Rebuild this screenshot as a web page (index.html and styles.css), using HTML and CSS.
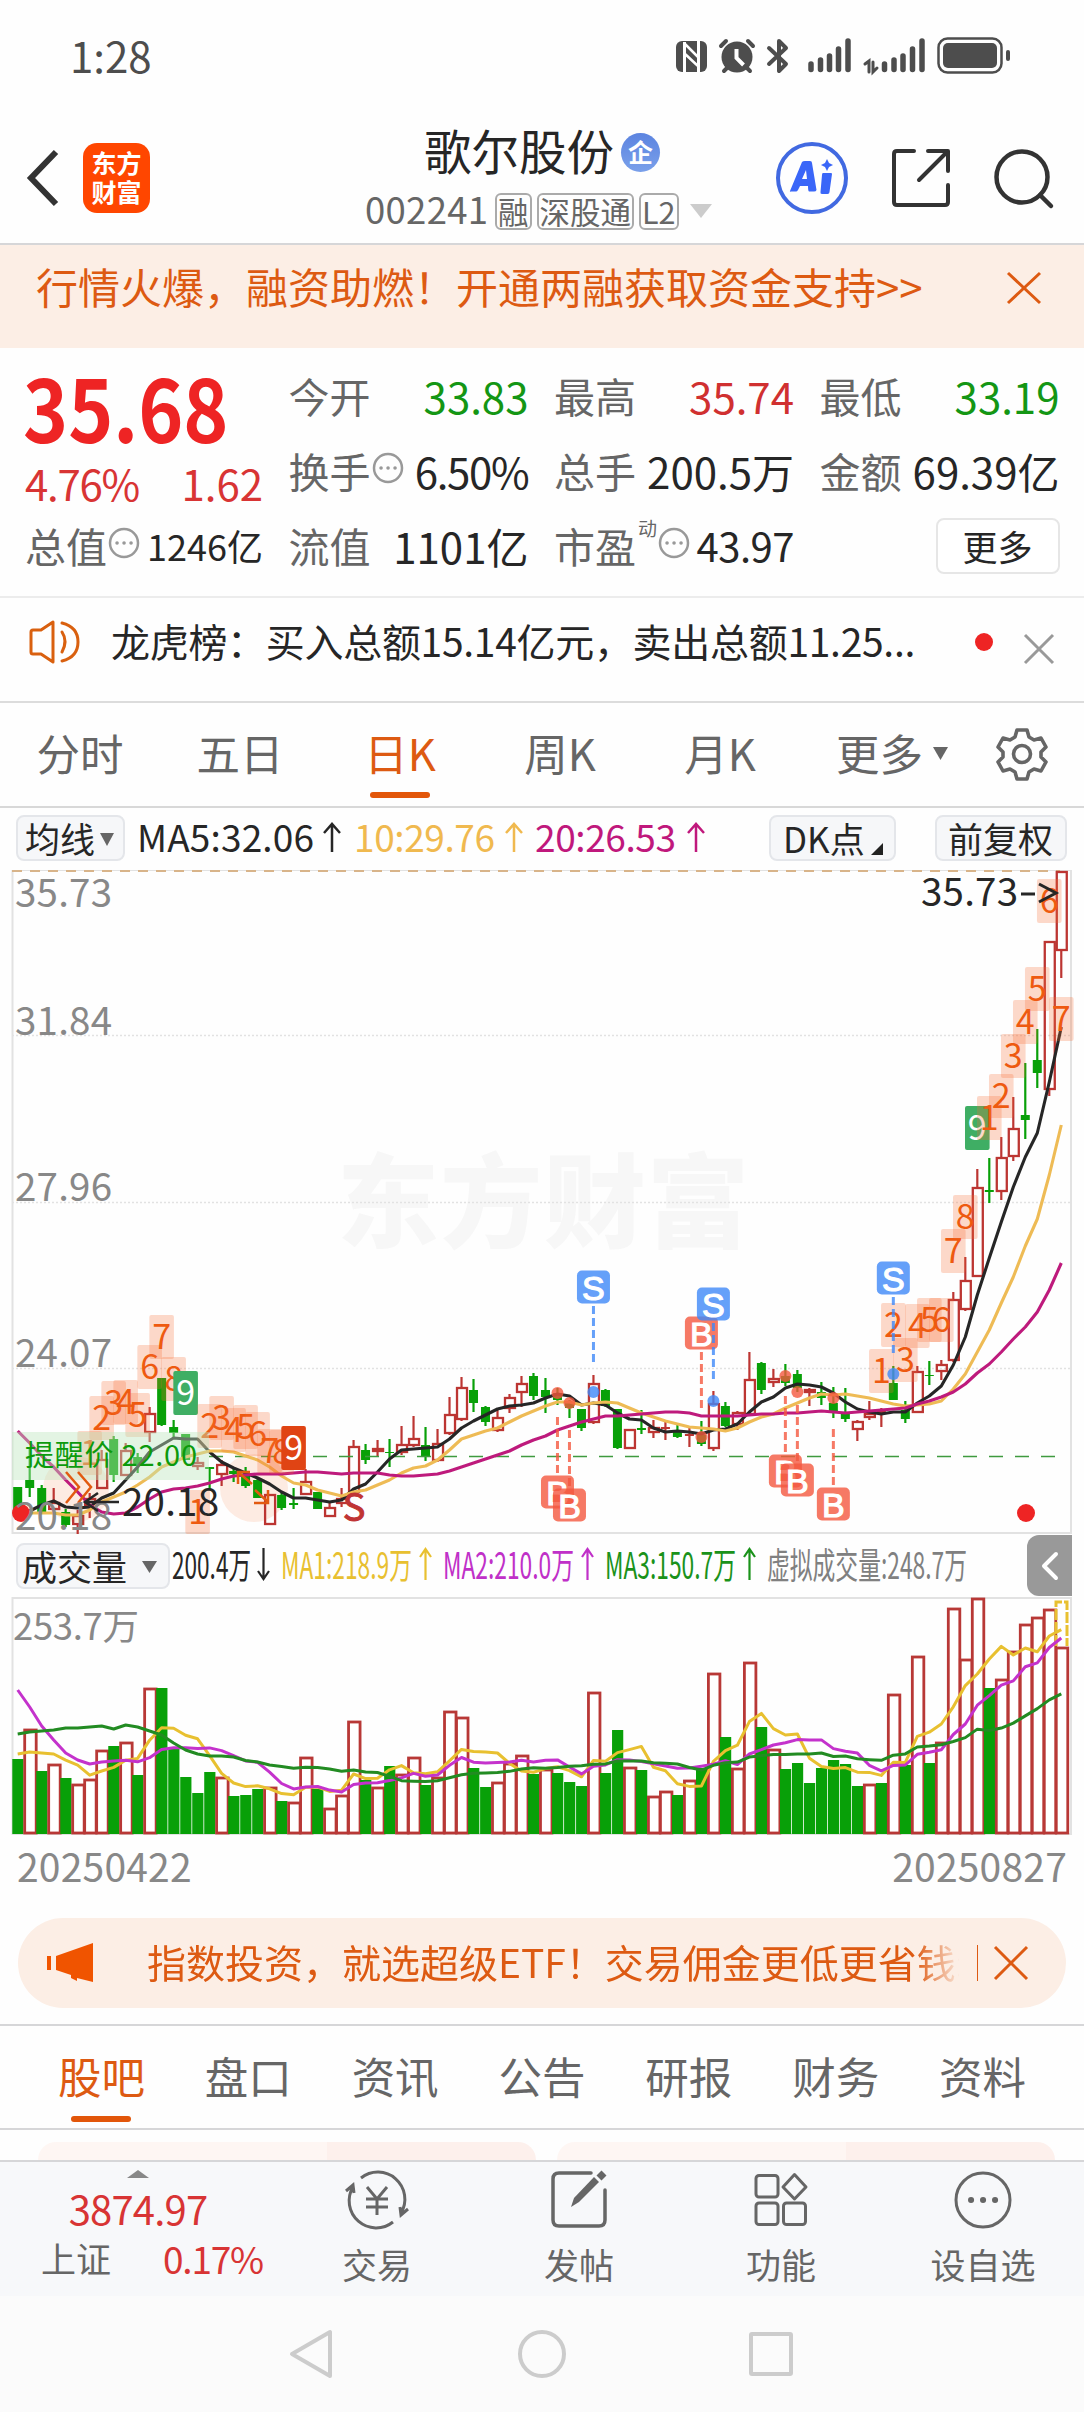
FILE: index.html
```html
<!DOCTYPE html>
<html lang="zh-CN">
<head>
<meta charset="utf-8">
<title>歌尔股份 002241</title>
<link rel="stylesheet" href="styles.css">
</head>
<body>
<div class="status">
  <span class="clock">1:28</span>
  <svg class="status-icons" width="340" height="40" viewBox="672 36 340 40" fill="#4d4d4d" stroke-linecap="round">
    <rect x="676" y="41" width="31" height="31" rx="6"/>
    <g stroke="#fff" stroke-width="3" fill="none" stroke-linecap="butt"><path d="M684.5 72V42M698.500 72V41"/><path d="M684 43l15 15M684 53l15 14" stroke-width="2.500"/></g>
    <circle cx="737" cy="57" r="15.500"/>
    <path d="M721 46l5-5M753 46l-5-5M724 71l4-4M750 71l-4-4" stroke="#4d4d4d" stroke-width="4"/>
    <path d="M736.500 49v9l7 7" fill="none" stroke="#fff" stroke-width="4" stroke-linecap="butt"/>
    <path d="M769 48l17 16-7 7V41l7 7-17 16" fill="none" stroke="#4d4d4d" stroke-width="4" stroke-linejoin="round"/>
    <path d="M811 64v5.500M820.500 60v9.500M829.500 56v13.500M838.500 49v20.500M848 41v28.500M884.500 64v5.500M894 60v9.500M903 56v13.500M912.500 49v20.500M922 41v28.500" stroke="#4d4d4d" stroke-width="5.500"/>
    <path d="M865 64l4-3v11M873 62v10l4-4" fill="none" stroke="#4d4d4d" stroke-width="3"/>
    <rect x="938.500" y="38.500" width="63" height="34" rx="9" fill="none" stroke="#4d4d4d" stroke-width="2.500"/>
    <rect x="943" y="43" width="54" height="25" rx="5"/>
    <rect x="1006" y="50" width="4" height="11" rx="2"/>
  </svg>
</div>

<header class="header">
  <div class="header-left">
    <svg width="32" height="56" viewBox="0 0 32 56" fill="none" stroke="#333" stroke-width="6"><path d="M29 2L4 28l25 26"/></svg>
    <div class="logo"><span>东方</span><span>财富</span></div>
  </div>
  <div class="header-mid">
    <div class="title"><span>歌尔股份</span><i class="badge">企</i></div>
    <div class="code"><span class="num">002241</span><b>融</b><b>深股通</b><b>L2</b><svg width="22" height="14"><path d="M0 0h22L11 14z" fill="#ccc"/></svg></div>
  </div>
  <div class="header-right">
    <svg width="72" height="72" viewBox="0 0 72 72" fill="#3a66f8">
      <circle cx="36" cy="36" r="34" fill="none" stroke="#4169e1" stroke-width="4"/>
      <path fill-rule="evenodd" d="M14 49L26 20Q27 19 29 19H34Q36 19 36 21L40.500 48Q40 49.500 38 49.500H33Q32 49 32 44H24L22 48Q21 49.500 20 49.500H15Q13.500 50 14 49zM26 37h5l-1-9z"/>
      <path d="M47 31h8q1 0 1 1l-2.500 18q0 2-2 2H46q-2 0-1.500-2l1.500-17q0-2 1-2zM51 17l2 4 4 2-4 2-2 4-2-4-4-2 4-2z"/>
    </svg>
    <svg width="60" height="60" viewBox="0 0 60 60" fill="none" stroke="#333" stroke-width="4" stroke-linecap="round" stroke-linejoin="round"><path d="M23 3H6Q3 3 3 6v48q0 3 3 3h48q3 0 3-3V37M37 3h20v20M56 4L28 32"/></svg>
    <svg width="60" height="62" viewBox="0 0 60 62" fill="none" stroke="#333" stroke-width="4.500" stroke-linecap="round"><circle cx="28" cy="30" r="25.500"/><path d="M46 48l11 11"/></svg>
  </div>
</header>

<div class="banner"><span>行情火爆，融资助燃！开通两融获取资金支持&gt;&gt;</span>
  <svg width="34" height="32" viewBox="0 0 34 32" stroke="#dd5a12" stroke-width="3"><path d="M1 1l32 30M33 1L1 31"/></svg>
</div>

<section class="quote">
  <div class="price-cell"><strong>35.68</strong><div class="pct"><span>4.76%</span><span>1.62</span></div></div>
  <div class="cell"><label>今开</label><span class="green">33.83</span></div>
  <div class="cell"><label>最高</label><span class="red">35.74</span></div>
  <div class="cell"><label>最低</label><span class="green">33.19</span></div>
  <div class="cell"><label>换手<svg class="info" viewBox="0 0 32 32"><circle cx="16" cy="16" r="14"/><path d="M9 16h.1M16 16h.1M23 16h.1"/></svg></label><span class="rate">6.50%</span></div>
  <div class="cell"><label>总手</label><span>200.5万</span></div>
  <div class="cell"><label>金额</label><span>69.39亿</span></div>
  <div class="cell"><label>总值<svg class="info" viewBox="0 0 32 32"><circle cx="16" cy="16" r="14"/><path d="M9 16h.1M16 16h.1M23 16h.1"/></svg></label><span class="small">1246亿</span></div>
  <div class="cell"><label>流值</label><span>1101亿</span></div>
  <div class="cell"><label>市盈<sup>动</sup><svg class="info" viewBox="0 0 32 32"><circle cx="16" cy="16" r="14"/><path d="M9 16h.1M16 16h.1M23 16h.1"/></svg></label><span class="pe">43.97</span></div>
  <div class="cell end"><button class="more">更多</button></div>
</section>

<div class="notice">
  <svg width="52" height="44" viewBox="0 0 52 44" fill="none" stroke="#d9600f" stroke-width="3" stroke-linecap="round" stroke-linejoin="round"><path d="M24 2v40L12 34H4q-2 0-2-2V12q0-2 2-2h8zM33 12q6 9 0 20M33 3q16 4 16 19T33 41"/></svg>
  <span>龙虎榜：买入总额15.14亿元，卖出总额11.25...</span>
  <i class="dot"></i>
  <svg width="30" height="30" viewBox="0 0 30 30" stroke="#999" stroke-width="3"><path d="M1 1l28 28M29 1L1 29"/></svg>
</div>

<nav class="periods">
  <a>分时</a><a>五日</a><a class="on">日K</a><a>周K</a><a>月K</a>
  <a class="more-tab">更多<svg width="15" height="13"><path d="M0 0h15L7.500 13z" fill="#666"/></svg></a>
  <a><svg width="54" height="54" viewBox="0 0 54 54" fill="none" stroke="#666" stroke-width="3.600" stroke-linejoin="round"><path d="M22 3h10l2 7 5 3 7-2 5 9-5 5v5l5 5-5 9-7-2-5 3-2 7H22l-2-7-5-3-7 2-5-9 5-5v-5l-5-5 5-9 7 2 5-3z"/><circle cx="27" cy="27" r="8.500"/></svg></a>
</nav>

<div class="ma-row">
  <button class="chip ma-chip">均线<svg width="14" height="13"><path d="M0 0h14L7 13z" fill="#666"/></svg></button>
  <svg class="ma-text" width="580" height="52" viewBox="136 811 580 52">
    <g font-size="37"><text x="137" y="852" textLength="177" fill="#262626">MA5:32.06</text>
    <text x="354" y="852" textLength="141" fill="#f0b94f">10:29.76</text>
    <text x="535" y="852" textLength="141" fill="#c0187c">20:26.53</text></g>
    <g fill="none" stroke-width="2.500"><path stroke="#262626" d="M332 852V824M324 833l8-9 8 9"/><path stroke="#f0b94f" d="M514 852V824M506 833l8-9 8 9"/><path stroke="#c0187c" d="M696 852V824M688 833l8-9 8 9"/></g>
  </svg>
  <button class="chip dk-chip">DK点<svg width="12" height="12"><path d="M12 0v12H0z" fill="#222"/></svg></button>
  <button class="chip fq-chip">前复权</button>
</div>

<svg id="kline" width="1084" height="664" viewBox="0 870 1084 664"></svg>

<div class="vol-row">
  <button class="chip vol-chip">成交量<svg width="15" height="12"><path d="M0 0h15L7.500 12z" fill="#666"/></svg></button>
  <svg class="vol-text" width="860" height="52" viewBox="167 1539 860 52">
    <g font-size="36.500">
    <text x="172" y="1579" textLength="79" lengthAdjust="spacingAndGlyphs" fill="#262626">200.4万</text>
    <text x="281" y="1579" textLength="131" lengthAdjust="spacingAndGlyphs" fill="#e8c030">MA1:218.9万</text>
    <text x="443" y="1579" textLength="131" lengthAdjust="spacingAndGlyphs" fill="#c030c8">MA2:210.0万</text>
    <text x="605" y="1579" textLength="131" lengthAdjust="spacingAndGlyphs" fill="#1a921a">MA3:150.7万</text>
    <text x="767" y="1579" textLength="200" lengthAdjust="spacingAndGlyphs" fill="#808080">虚拟成交量:248.7万</text></g>
    <g fill="none" stroke-width="2.200"><path stroke="#262626" d="M263.500 1548v31M258 1571l5.500 8 5.500-8"/><path stroke="#e8c030" d="M425.500 1580v-31M420 1557l5.500-8 5.500 8"/><path stroke="#c030c8" d="M587.500 1580v-31M582 1557l5.500-8 5.500 8"/><path stroke="#1a921a" d="M749.500 1580v-31M744 1557l5.500-8 5.500 8"/></g>
  </svg>
  <div class="handle"><svg width="18" height="30" viewBox="0 0 18 30" fill="none" stroke="#fff" stroke-width="4" stroke-linecap="round" stroke-linejoin="round"><path d="M15 3L3 15l12 12"/></svg></div>
</div>

<svg id="volume" width="1084" height="240" viewBox="0 1597 1084 240"></svg>

<div class="dates"><span>20250422</span><span>20250827</span></div>

<div class="promo">
  <svg width="48" height="40" viewBox="0 0 48 40" fill="#f05400"><path d="M0 13h4v14H0zM9 13L46 0v39L30 35v3l-6-3v-3l-15-5z"/></svg>
  <span>指数投资，就选超级ETF！交易佣金更低更省钱:</span>
  <i></i>
  <svg width="34" height="34" viewBox="0 0 34 34" stroke="#dd5a12" stroke-width="3"><path d="M1 1l32 32M33 1L1 33"/></svg>
</div>

<nav class="sections"><a class="on">股吧</a><a>盘口</a><a>资讯</a><a>公告</a><a>研报</a><a>财务</a><a>资料</a></nav>
<div class="cards"><div></div><div></div></div>

<nav class="bottom">
  <div class="index"><svg width="22" height="8"><path d="M11 0l11 8H0z" fill="#888"/></svg><b>3874.97</b><div><span>上证</span><em>0.17%</em></div></div>
  <a><svg width="66" height="60" viewBox="-33 -30 66 60" fill="none" stroke="#666" stroke-width="3"><path d="M-16-22A27 27 0 0 1 24 13M16 22A27 27 0 0 1-24-13M-31-9l7-6 1 8M31 9l-7 6-1-8M-10-13L0-1 10-13M0-1V15M-11-1H11M-11 7H11"/></svg>交易</a>
  <a><svg width="60" height="60" viewBox="-30 -30 60 60" fill="none" stroke="#666" stroke-width="3.500" stroke-linecap="round"><path d="M12-27H-20Q-26-27-26-21V20Q-26 26-20 26H20Q26 26 26 20V-10"/><path d="M-8 7L-5-2 15-23 20-18 0 2z" fill="#666" stroke="none"/><path d="M20-22L25-27" stroke-width="7" stroke-linecap="butt"/></svg>发帖</a>
  <a><svg width="60" height="60" viewBox="-30 -30 60 60" fill="none" stroke="#666" stroke-width="3"><rect x="-25" y="-24.500" width="22" height="21.500" rx="3"/><rect x="-25" y="3" width="22" height="21.500" rx="3"/><rect x="2.500" y="3" width="22" height="21.500" rx="3"/><path d="M13.500-25.500L25-13 13.500-1 2-13z" stroke-linejoin="round"/></svg>功能</a>
  <a><svg width="60" height="60" viewBox="-30 -30 60 60" fill="none" stroke="#666" stroke-width="3"><circle r="27"/><path d="M-12 0h.1M0 0h.1M12 0h.1" stroke-width="6" stroke-linecap="round"/></svg>设自选</a>
</nav>
<div class="sysnav">
  <svg width="510" height="60" viewBox="287 2324 510 60" fill="none" stroke="#ccc" stroke-width="4" stroke-linejoin="round"><path d="M292 2354l38-22v44z"/><circle cx="542" cy="2354" r="22"/><rect x="751" y="2334" width="40" height="40" rx="1"/></svg>
</div>
<script src="chart.js"></script>
</body>
</html>
```
FILE: styles.css
```css
* { box-sizing: border-box; }
body { margin: 0; width: 1084px; background: #fefefe; color: #262626; font-family: "Noto Sans CJK SC", "Noto Sans", sans-serif; }
svg { display: block; flex: none; overflow: visible; }
span, a, label, b, button { white-space: nowrap; }
button { font-family: inherit; padding: 0; color: #262626; }
i, em { font-style: normal; }
.red { color: #d03030; }
.green { color: #149614; }

.status { height: 112px; display: flex; justify-content: space-between; padding: 0 72px 0 70px; }
.clock { font-size: 42px; line-height: 62px; padding-top: 24px; color: #4d4d4d; }
.status-icons { margin-top: 36px; }

.header { height: 133px; display: grid; grid-template-columns: 366px 400px 1fr; border-bottom: 2px solid #d6d6d8; }
.header-left { display: flex; align-items: center; gap: 24px; padding-left: 27px; }
.logo { width: 67px; height: 70px; border-radius: 14px; background: #ff4600; color: #fff; display: flex; flex-direction: column; justify-content: center; align-items: center; font-size: 25px; font-weight: 700; line-height: 29px; padding-bottom: 2px; }
.header-mid { display: flex; flex-direction: column; }
.title { display: flex; align-items: center; gap: 7px; padding-left: 58px; height: 80px; font-size: 47.5px; line-height: 74px; }
.title span { margin-top: -5px; }
.badge { width: 39px; height: 39px; border-radius: 50%; background: linear-gradient(#5c84e0, #7aa0ea); color: #fff; font-size: 25px; font-weight: 700; line-height: 36px; text-align: center; }
.code { display: flex; align-items: center; height: 38px; color: #666; font-size: 36.500px; line-height: 38px; }
.code .num { width: 130px; margin: -4px 0 0 -1px; letter-spacing: .3px; }
.code b { font-size: 30.500px; font-weight: 400; line-height: 32px; height: 37px; border: 2px solid #aaa; border-radius: 6px; padding: 0 1px; margin-right: 5px; }
.code svg { margin-left: 6px; }
.header-right { display: flex; align-items: center; padding-left: 10px; gap: 43px; }

.banner { height: 103px; background: #fceee5; color: #dd5a12; display: flex; justify-content: space-between; align-items: flex-start; padding: 0 43px 0 36px; font-size: 42px; line-height: 62px; }
.banner span { padding-top: 10px; }
.banner svg { margin-top: 27px; }

.quote { height: 250px; display: grid; grid-template-columns: 238px 240px 240px 240px; grid-template-rows: 75px 75px 75px; column-gap: 25.500px; padding: 10px 0 0 25px; border-bottom: 2px solid #ececec; font-size: 42px; line-height: 75px; }
.price-cell { grid-row: 1 / 3; color: #ee2424; }
.price-cell strong { display: block; height: 86px; font-size: 86px; line-height: 96px; transform: scaleX(.89); transform-origin: 0 50%; margin-left: -2px; }
.pct { display: flex; justify-content: space-between; color: #d83434; line-height: 77px; }
.pct span:first-child, .rate { letter-spacing: -1.3px; }
.cell { display: flex; justify-content: space-between; }
.cell label { color: #666; display: flex; font-size: 41px; }
.cell .small { font-size: 36px; }
.cell .pe { font-size: 40px; letter-spacing: -.5px; }
.cell.end { justify-content: flex-end; align-items: center; }
.info { width: 32px; height: 32px; margin: 19px 0 0 1px; fill: none; stroke: #999; stroke-width: 2.500; stroke-linecap: round; }
.info path { stroke-width: 3.500; }
.cell sup { font-size: 19px; line-height: 39px; margin-left: 2px; }
.more { width: 124px; height: 56px; margin-top: 0; border: 2px solid #e6e6e6; border-radius: 8px; background: #fff; font-size: 35px; line-height: 46px; }

.notice { height: 105px; display: flex; align-items: center; border-bottom: 2px solid #dcdcdc; padding: 0 30px 16px 29px; }
.notice span { font-size: 39px; line-height: 60px; padding-left: 30px; margin-top: -4px; flex: 1; letter-spacing: -.3px; }
.dot { width: 18px; height: 18px; border-radius: 50%; background: #ee2424; margin: 0 31px 0 0; }
.notice svg:last-child { margin-top: 14px; }

.periods { height: 105px; display: grid; grid-template-columns: repeat(5, 160px) 184px 76px; border-bottom: 2px solid #d8d8d8; color: #666; font-size: 43.500px; line-height: 99px; text-align: center; }
.periods a, .sections a { display: flex; justify-content: center; align-items: flex-start; }
.periods a > svg { align-self: center; margin-top: -1px; }
.periods .more-tab svg { margin: 0 0 3px 10px; }
.periods .on, .sections .on { color: #dd5a12; flex-direction: column; justify-content: flex-start; align-items: center; }
.on::after { content: ""; width: 60px; height: 6px; border-radius: 3px; background: #e2560a; margin-top: -10px; }

.ma-row { height: 62px; display: flex; align-items: flex-start; padding: 7px 0 0 16px; }
.chip { height: 46px; border: 2px solid #e4e6ea; border-radius: 8px; background: #f6f7f9; font-size: 35px; line-height: 38px; display: flex; align-items: center; }
.chip svg { margin-top: 2px; }
.ma-chip { width: 109px; padding-left: 7px; gap: 5px; }
.ma-text { margin: -4px 0 0 11px; }
.dk-chip { width: 127px; padding-left: 12px; margin-left: 53px; gap: 6px; }
.dk-chip svg { align-self: flex-end; margin-bottom: 4px; }
.fq-chip { width: 132px; margin-left: 39px; padding-left: 11px; }

#kline, #volume { overflow: hidden; }
.vol-row { height: 63px; display: flex; align-items: flex-start; padding: 9px 0 0 16px; }
.vol-chip { width: 154px; padding-left: 4px; gap: 15px; }
.vol-text { margin: -4px 0 0 -3px; }
.handle { width: 45px; height: 61px; margin-top: -8px; border-radius: 12px 0 0 12px; background: #999; display: flex; align-items: center; justify-content: center; }

.dates { height: 81px; display: flex; justify-content: space-between; padding: 0 17px; font-size: 39px; line-height: 56px; color: #888; letter-spacing: .2px; }
.promo { height: 90px; margin: 0 18px; border-radius: 45px; background: #fceee5; color: #dd5a12; font-size: 39px; line-height: 84px; display: flex; align-items: center; padding: 0 38px 0 29px; }
.promo span { flex: 1; overflow: hidden; margin: -5px 18px 0 52px; -webkit-mask: linear-gradient(90deg, #000 0 768px, transparent 815px); mask: linear-gradient(90deg, #000 0 768px, transparent 815px); }
.promo i { width: 1px; height: 36px; background: #dd5a12; margin-right: 16px; }

.sections { height: 106px; margin-top: 16px; border-top: 2px solid #d6d6d8; border-bottom: 2px solid #d6d6d8; display: grid; grid-template-columns: repeat(7, 1fr); padding: 0 28px; color: #666; font-size: 43.500px; line-height: 100px; }
.cards { height: 30px; display: flex; gap: 21px; padding: 12px 29px 0 38px; overflow: hidden; }
.cards div { flex: 1; border-radius: 22px 22px 0 0; background: linear-gradient(90deg, #fef6f3 58%, #fdf0ec 58%); }

.bottom { height: 136px; display: grid; grid-template-columns: 276px repeat(4, 202px); background: #f7f8fa; border-top: 2px solid #d6d6d8; color: #666; }
.bottom a { display: flex; flex-direction: column; align-items: center; font-size: 35px; line-height: 50px; padding-top: 8px; gap: 9px; }
.index { display: flex; flex-direction: column; align-items: center; padding-top: 8px; }
.index b { font-weight: 400; font-size: 40px; line-height: 60px; letter-spacing: -.8px; color: #d83434; }
.index div { align-self: stretch; display: flex; justify-content: space-between; padding: 0 13px 0 41px; font-size: 35px; line-height: 40px; }
.index em { color: #d83434; font-size: 37px; letter-spacing: -1.200px; }
.sysnav { height: 116px; background: #fbfbfb; display: flex; justify-content: center; align-items: center; }
```
FILE: chart.js
```js
// Each candle: direction, high, low, body top, body bottom.
var candles = `g1487 1512 1487 1512|g1447 1497 1480 1488|g1485 1512 1488 1512|r1488 1513 1502 1510|g1509 1527 1512 1525|r1510 1534 1515 1525|r1493 1518 1498 1506|r1450 1489 1459 1489|g1436 1482 1439 1475|r1443 1476 1450 1476|g1453 1473 1457 1466|r1407 1442 1413 1433|g1378 1426 1378 1425|g1420 1439 1427 1433|g1434 1460 1434 1460|r1457 1470 1462 1467|g1467 1490 1467 1469|r1460 1486 1464 1475|g1468 1482 1471 1474|g1467 1488 1474 1486|g1477 1498 1480 1498|r1494 1525 1494 1525|g1493 1510 1495 1508|g1488 1509 1503 1505|r1469 1495 1481 1495|g1492 1509 1492 1509|r1503 1517 1507 1517|r1488 1507 1498 1504|r1440 1493 1446 1493|g1444 1464 1450 1460|r1440 1457 1448 1452|g1439 1467 1452 1453|r1426 1455 1444 1453|r1416 1447 1438 1446|g1427 1461 1445 1456|r1429 1462 1443 1461|r1397 1435 1414 1434|r1377 1421 1387 1420|g1379 1412 1390 1403|g1406 1426 1407 1422|r1410 1432 1417 1431|r1394 1413 1397 1409|r1376 1407 1383 1393|g1373 1400 1376 1396|g1378 1413 1390 1397|g1388 1405 1393 1400|g1400 1418 1403 1408|g1409 1431 1409 1428|r1375 1424 1383 1423|g1389 1407 1390 1406|g1409 1449 1409 1448|r1429 1449 1429 1449|g1410 1434 1428 1430|r1420 1438 1427 1433|r1420 1440 1427 1429|g1425 1438 1431 1437|r1428 1447 1434 1436|g1421 1446 1435 1444|r1391 1451 1403 1449|g1402 1427 1406 1426|r1411 1430 1412 1425|r1352 1415 1379 1415|g1362 1394 1363 1390|r1369 1387 1378 1383|g1364 1386 1376 1383|g1370 1392 1374 1388|r1388 1406 1389 1393|g1382 1405 1392 1398|g1387 1418 1403 1411|g1388 1422 1413 1419|r1420 1441 1421 1430|r1401 1420 1413 1418|r1408 1427 1411 1413|g1366 1400 1383 1400|g1401 1423 1410 1419|r1366 1413 1371 1413|g1361 1385 1375 1376|r1360 1380 1364 1372|r1292 1362 1299 1361|r1257 1311 1280 1310|r1169 1277 1187 1277|g1158 1203 1190 1192|r1137 1200 1157 1192|r1097 1161 1128 1157|g1063 1139 1115 1120|g1029 1088 1060 1073|r941 1096 941 1090|r871 978 871 951`.split('|').map(function (s) {
  return [s[0]].concat(s.slice(1).split(' ').map(Number));
});
var ma5 = [1511,1505,1501,1507,1508,1507,1498,1493,1480,1467,1452,1445,1438,1439,1439,1452,1462,1468,1473,1478,1484,1492,1498,1498,1500,1502,1500,1489,1484,1472,1459,1450,1449,1448,1447,1439,1428,1421,1415,1409,1406,1405,1403,1398,1394,1396,1405,1403,1405,1413,1419,1420,1428,1432,1431,1432,1434,1430,1429,1424,1412,1402,1397,1388,1384,1385,1387,1393,1402,1409,1412,1414,1412,1412,1403,1396,1386,1365,1337,1295,1258,1222,1187,1157,1133,1082,1027];
var ma10 = [1513,1513,1513,1515,1515,1510,1502,1497,1492,1485,1477,1467,1462,1457,1454,1451,1451,1452,1456,1460,1467,1476,1483,1485,1490,1493,1496,1492,1490,1485,1480,1473,1468,1466,1460,1450,1439,1435,1431,1428,1422,1416,1411,1406,1402,1402,1405,1403,1402,1403,1408,1413,1417,1421,1424,1427,1428,1429,1431,1428,1422,1417,1414,1408,1403,1398,1394,1395,1394,1396,1398,1401,1404,1406,1405,1404,1401,1389,1374,1352,1330,1303,1277,1246,1219,1175,1125];
var ma20 = [1431,1443,1456,1467,1480,1492,1505,1512,1514,1513,1507,1499,1492,1489,1488,1486,1483,1479,1476,1475,1474,1474,1474,1473,1472,1472,1473,1474,1473,1473,1473,1475,1476,1476,1475,1474,1471,1467,1463,1459,1455,1451,1445,1440,1436,1430,1426,1422,1419,1416,1416,1415,1414,1413,1412,1412,1413,1416,1416,1416,1416,1415,1414,1414,1413,1413,1412,1411,1412,1413,1412,1411,1410,1409,1408,1404,1401,1397,1392,1384,1373,1364,1352,1339,1327,1312,1290,1263];
// Nine-count labels: column, centre y, digit, optional kind.
var counts = [[6,1453,1],[7,1418,2],[8,1403,3],[9,1402,4],[10,1415,5],[11,1367,6],[12,1337,7],[13,1379,8],[14,1393,9,'#3fae64'],[15,1512,1],[16,1426,2],[17,1418,3],[18,1430,4],[19,1427,5],[20,1434,6],[21,1451,7],[22,1452,8],[23,1448,9,'#e04414'],[72,1371,1],[73,1325,2],[74,1360,3],[75,1326,4],[76,1320,5],[77,1320,6],[78,1251,7],[79,1217,8],[80,1128,9,'#3fae64'],[81,1118,1],[82,1096,2],[83,1056,3],[84,1022,4],[85,989,5],[86,901,6],[87,1019,7]];
// Trade marks: column, mark centre y, letter, dot y, dash start, dash end.
var marks = [[45,1492,'B',1393,1417,1473],[46,1505,'B',1403,1430,1486],[48,1287,'S',1392,1306,1363],[57,1333,'B',1437,1352,1408],[58,1304,'S',1401,1323,1379],[64,1471,'B',1376,1396,1452],[65,1480,'B',1392,1405,1461],[68,1504,'B',1398,1429,1485],[73,1278,'S',1374,1297,1353]];

function X(i) { return 17.7 + 11.995 * i; }
function line(a, start, color, w) {
  return '<polyline fill="none" stroke-linejoin="round" stroke="' + color + '" stroke-width="' + w + '" points="' +
    a.map(function (y, k) { return X(k + start).toFixed(1) + ',' + y; }).join(' ') + '"/>';
}
function text(x, y, s, size, fill, len, extra) {
  return '<text x="' + x + '" y="' + y + '" font-size="' + size + '" fill="' + fill + '"' +
    (len ? ' textLength="' + len + '"' : '') + ' ' + (extra || '') + '>' + s + '</text>';
}

var k = '';
k += '<text x="337" y="1240" font-size="102" font-weight="900" fill="#f7f7f7" textLength="412">东方财富</text>';
k += '<g fill="#fdebe2"><circle cx="76" cy="1489" r="33"/><circle cx="254" cy="1488" r="34"/></g>';
k += '<g fill="none" stroke="#e2e2e2" stroke-width="2"><path d="M12.500 870V1533H1071V870z"/><path stroke-width="1.500" stroke-dasharray="2 2" d="M12 1035.500H1071M12 1202.500H1071M12 1368.500H1071"/></g>';
k += '<path d="M12 871H1060" stroke="#d8b48a" stroke-width="2" stroke-dasharray="10 8"/>';
candles.forEach(function (c, i) {
  var x = X(i), red = c[0] === 'r', col = red ? '#bc3532' : '#08a008';
  if (c[1] < c[3]) k += '<path d="M' + x + ' ' + c[1] + 'V' + c[3] + '" stroke="' + col + '" stroke-width="2.200"/>';
  if (c[2] > c[4]) k += '<path d="M' + x + ' ' + c[4] + 'V' + c[2] + '" stroke="' + col + '" stroke-width="2.200"/>';
  if (red && c[4] - c[3] > 3) k += '<rect x="' + (x - 4.5) + '" y="' + (c[3] + 1) + '" width="10" height="' + (c[4] - c[3] - 2) + '" fill="none" stroke="' + col + '" stroke-width="2.300"/>';
  else k += '<rect x="' + (x - 4.5) + '" y="' + c[3] + '" width="9" height="' + (c[4] - c[3]) + '" fill="' + col + '"/>';
});
k += '<path d="M209 1456.500H1066" stroke="#3f9a3f" stroke-width="1.500" stroke-dasharray="14 12"/>';
k += line(ma5, 1, '#262626', 3.1) + line(ma10, 1, '#eebb55', 3.1) + line(ma20, 0, '#be1a7c', 3.1);
counts.forEach(function (c) {
  var x = X(c[0]);
  k += '<rect x="' + (x - 12.3) + '" y="' + (c[1] - 22) + '" width="24.600" height="44" rx="2" fill="' + (c[3] || 'rgba(248,110,50,.26)') + '"/>';
  k += text(x, c[1] + 12, c[2], 34, c[3] ? '#fff' : '#ee5a10', 0, 'text-anchor="middle"');
});
marks.forEach(function (m) {
  var x = X(m[0]), s = m[2] === 'S', col = s ? '#3f88f8' : '#f4583e';
  k += '<path d="M' + x + ' ' + m[4] + 'V' + m[5] + '" stroke="' + col + '" stroke-opacity=".8" stroke-width="3" stroke-dasharray="8 4"/>';
  k += '<circle cx="' + x + '" cy="' + m[3] + '" r="6" fill="' + col + '" opacity=".8"/>';
  k += '<rect x="' + (x - 16.5) + '" y="' + (m[1] - 16.5) + '" width="33" height="33" rx="5" fill="' + col + '" opacity=".8"/>';
  k += text(x, m[1] + 12.5, m[2], 34, '#fff', 0, 'text-anchor="middle" class="mark" font-family="Liberation Sans" stroke="#fff" stroke-width="1.200"');
});
k += '<rect x="12" y="1432" width="197" height="48" fill="#bfe6bf" opacity=".42"/>';
k += text(25, 1466, '提醒价 22.00', 29, '#0c9a0c', 172);
k += '<g fill="none" stroke="#e25a10" stroke-width="2.500"><path d="M66 1472l13 15-13 16M78 1472l13 15-13 16"/><path d="M252 1484l-14-12M238 1484v-12h12M255 1490l13 12M268 1490v13h-14"/></g>';
k += '<circle cx="21" cy="1513" r="9" fill="#ee2424"/><circle cx="1026" cy="1513" r="9" fill="#ee2424"/>';
[[907,'35.73'],[1035,'31.84'],[1201,'27.96'],[1367,'24.07'],[1530,'20.18']].forEach(function (l) {
  k += text(15, l[0], l[1], 38.5, '#888', 97);
});
k += text(122, 1516, '20.18', 38.5, '#262626', 97) + '<path d="M119 1502H85M98 1493l-13 9 13 9" fill="none" stroke="#262626" stroke-width="2.600"/>';
k += text(921, 906, '35.73', 38.5, '#262626', 97) + '<path d="M1021 894h14M1039 884l17 9-17 9" fill="none" stroke="#262626" stroke-width="3"/>';
k += text(354, 1521, 'S', 38, '#c03434', 0, 'text-anchor="middle" stroke="#c03434" stroke-width="1"');
document.getElementById('kline').innerHTML = k;

var tops = [1759,1729,1771,1764,1778,1784,1779,1750,1746,1742,1775,1688,1688,1748,1777,1793,1772,1777,1796,1795,1789,1787,1801,1802,1757,1789,1808,1795,1721,1780,1787,1766,1774,1757,1785,1777,1711,1717,1768,1787,1782,1763,1755,1774,1769,1773,1782,1786,1692,1773,1730,1767,1770,1796,1791,1795,1780,1768,1673,1737,1768,1662,1727,1749,1769,1763,1783,1768,1760,1764,1786,1784,1783,1694,1765,1656,1763,1742,1608,1659,1598,1688,1679,1651,1624,1617,1609,1647];
var green = [0,2,4,8,10,12,13,14,15,16,18,19,20,22,25,29,31,34,38,39,43,45,46,47,49,50,52,55,57,59,62,64,65,66,67,68,69,70,72,74,76,81];
function mean(n, head) {
  return tops.map(function (t, i) {
    if (i < head.length) return head[i];
    return tops.slice(i - n + 1, i + 1).reduce(function (a, b) { return a + b; }, 0) / n;
  });
}
var v = '<g fill="none" stroke="#e2e2e2" stroke-width="2"><path d="M12.500 1598V1834H1071V1598z"/></g>';
tops.forEach(function (t, i) {
  var x = X(i);
  v += green.indexOf(i) >= 0
    ? '<rect x="' + (x - 5.4) + '" y="' + t + '" width="11.200" height="' + (1834 - t) + '" fill="#08a008"/>'
    : '<rect x="' + (x - 5) + '" y="' + (t + 1) + '" width="11.500" height="' + (1833 - t - 1) + '" fill="#fff" stroke="#b83836" stroke-width="2.800"/>';
});
v += '<path d="M1056 1646V1602H1067V1646" fill="none" stroke="#e8c030" stroke-width="3" stroke-dasharray="11 2"/>';
v += line(mean(5, [1754,1752,1753,1754]), 0, '#e8c030', 3);
v += line(mean(10, [1690,1707,1726,1740,1753,1760,1764,1762,1761]), 0, '#c432cc', 3);
v += line(mean(20, [1734,1732,1731,1730,1728,1728,1727,1726,1729,1725,1727,1731,1735,1743,1750,1754,1756,1756,1757]), 0, '#228b22', 3);
v += text(13, 1640, '253.7万', 36.5, '#888', 126);
document.getElementById('volume').innerHTML = v;
```
